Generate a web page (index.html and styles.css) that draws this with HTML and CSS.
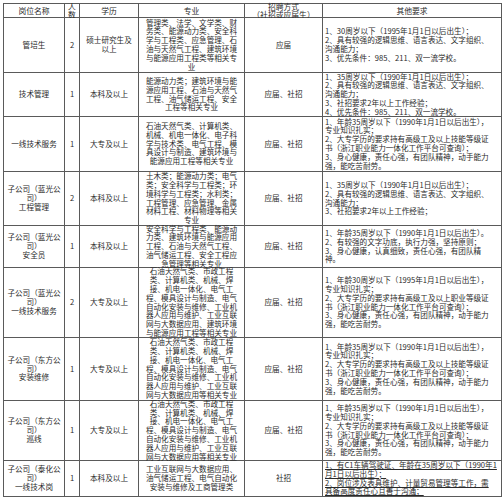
FILE: index.html
```html
<!DOCTYPE html>
<html lang="zh">
<head>
<meta charset="utf-8">
<link rel="stylesheet" href="styles.css">
</head>
<body>
<div class="sheet">
  <div class="c hd"><div>岗位名称</div></div>
  <div class="c hd"><div>人<br>数</div></div>
  <div class="c hd"><div>学历</div></div>
  <div class="c hd"><div>专业</div></div>
  <div class="c hd"><div>招聘方式<br>（社招或应届生）</div></div>
  <div class="c hd"><div>其他要求</div></div>

  <div class="c"><div>管培生</div></div>
  <div class="c"><div>2</div></div>
  <div class="c"><div>硕士研究生及<br>以上</div></div>
  <div class="c"><div>管理类、法学、文学类、财<br>务类、能源动力类、安全科<br>学与工程类、应急管理、石<br>油与天然气工程、建筑环境<br>与能源应用工程类等相关专<br>业</div></div>
  <div class="c"><div>应届</div></div>
  <div class="c req"><div>1、30周岁以下（1995年1月1日以后出生）；<br>2、具有较强的逻辑思维、语言表达、文字组织、<br>沟通能力；<br>3、优先条件：985、211、双一流学校。</div></div>

  <div class="c"><div>技术管理</div></div>
  <div class="c"><div>1</div></div>
  <div class="c"><div>本科及以上</div></div>
  <div class="c"><div>能源动力类；建筑环境与能<br>源应用工程、石油与天然气<br>工程、油气储运工程、安全<br>工程等相关专业</div></div>
  <div class="c"><div>应届、社招</div></div>
  <div class="c req"><div>1、35周岁以下（1990年1月1日以后出生）；<br>2、具有较强的逻辑思维、语言表达、文字组织、<br>沟通能力；<br>3、社招要求2年以上工作经验；<br>4、优先条件：985、211、双一流学校。</div></div>

  <div class="c"><div>一线技术服务</div></div>
  <div class="c"><div>1</div></div>
  <div class="c"><div>大专及以上</div></div>
  <div class="c"><div>石油天然气类、计算机类、<br>机械、机电一体化、电子科<br>学与技术类、电气工程、模<br>具设计与制造、建筑环境与<br>能源应用工程等相关专业</div></div>
  <div class="c"><div>应届、社招</div></div>
  <div class="c req"><div>1、年龄35周岁以下（1990年1月1日以后出生），<br>专业知识扎实；<br>2、大专学历的要求持有高级工及以上技能等级证<br>书（浙江职业能力一体化工作平台可查询）；<br>3、身心健康，责任心强，有团队精神，动手能力<br>强，能吃苦耐劳。</div></div>

  <div class="c"><div>子公司（蓝光公<br>司）<br>工程管理</div></div>
  <div class="c"><div>2</div></div>
  <div class="c"><div>本科及以上</div></div>
  <div class="c"><div>土木类；能源动力类；电气<br>类；安全科学与工程类；环<br>境科学与工程类；水利类；<br>工程管理、应急管理、金属<br>材料工程、材料物理等相关<br>专业</div></div>
  <div class="c"><div>应届、社招</div></div>
  <div class="c req"><div>1、35周岁以下（1990年1月1日以后出生）；<br>2、具有较强的逻辑思维、语言表达、文字组织、<br>沟通能力；<br>3、社招要求2年以上工作经验；</div></div>

  <div class="c"><div>子公司（蓝光公<br>司）<br>安全员</div></div>
  <div class="c"><div>1</div></div>
  <div class="c"><div>本科及以上</div></div>
  <div class="c"><div>安全科学与工程类、能源动<br>力类、建筑环境与能源应用<br>工程、石油与天然气工程、<br>油气储运工程、安全工程应<br>急管理等相关专业</div></div>
  <div class="c"><div>应届、社招</div></div>
  <div class="c req"><div>1、年龄35周岁以下（1990年1月1日以后出生）。<br>2、有较强的文字功底，执行力强，坚持原则；<br>3、身心健康，认真细致，责任心强，有团队精<br>神。</div></div>

  <div class="c"><div>子公司（蓝光公<br>司）<br>一线技术服务</div></div>
  <div class="c"><div>2</div></div>
  <div class="c"><div>大专及以上</div></div>
  <div class="c"><div>石油天然气类、市政工程<br>类、计算机类、机械、焊<br>接、机电一体化、电气工<br>程、模具设计与制造、电气<br>自动化安装与维修、工业机<br>器人应用与维护、工业互联<br>网与大数据应用、建筑环境<br>与能源应用工程等相关专业</div></div>
  <div class="c"><div>应届、社招</div></div>
  <div class="c req"><div>1、年龄30周岁以下（1995年1月1日以后出生），<br>专业知识扎实；<br>2、大专学历的要求持有高级工及以上职业等级证<br>书（浙江职业能力一体化工作平台可查询）；<br>3、身心健康，责任心强，有团队精神，动手能力<br>强，能吃苦耐劳。</div></div>

  <div class="c"><div>子公司（东方公<br>司）<br>安装维修</div></div>
  <div class="c"><div>1</div></div>
  <div class="c"><div>大专及以上</div></div>
  <div class="c"><div>石油天然气类、市政工程<br>类、计算机类、机械、焊<br>接、机电一体化、电气工<br>程、模具设计与制造、电气<br>自动化安装与维修、工业机<br>器人应用与维护、工业互联<br>网与大数据应用等相关专业</div></div>
  <div class="c"><div>应届、社招</div></div>
  <div class="c req"><div>1、年龄35周岁以下（1990年1月1日以后出生），<br>专业知识扎实；<br>2、大专学历的要求持有高级工及以上技能等级证<br>书（浙江职业能力一体化工作平台可查询）；<br>3、身心健康，责任心强，有团队精神，动手能力<br>强，能吃苦耐劳。</div></div>

  <div class="c"><div>子公司（东方公<br>司）<br>巡线</div></div>
  <div class="c"><div>1</div></div>
  <div class="c"><div>大专及以上</div></div>
  <div class="c"><div>石油天然气类、市政工程<br>类、计算机类、机械、焊<br>接、机电一体化、电气工<br>程、模具设计与制造、电气<br>自动化安装与维修、工业机<br>器人应用与维护、工业互联<br>网与大数据应用等相关专业</div></div>
  <div class="c"><div>应届、社招</div></div>
  <div class="c req"><div>1、年龄35周岁以下（1990年1月1日以后出生），<br>专业知识扎实；<br>2、大专学历的要求持有高级工及以上技能等级证<br>书（浙江职业能力一体化工作平台可查询）；<br>3、身心健康，责任心强，有团队精神，动手能力<br>强，能吃苦耐劳。</div></div>

  <div class="c"><div>子公司（泰化公<br>司）<br>一线技术岗</div></div>
  <div class="c"><div>1</div></div>
  <div class="c"><div>本科及以上</div></div>
  <div class="c"><div>工业互联网与大数据应用、<br>油气储运工程、电气自动化<br>安装与维修及工商管理类</div></div>
  <div class="c"><div>社招</div></div>
  <div class="c req ul"><div>1、有C1车辆驾驶证、年龄在35周岁以下（1990年1<br>月1日以后出生）；<br>2、岗位涉及表具维护、计量贸易管理等工作，需<br>具备高度责任心且善于沟通；</div></div>
</div>
</body>
</html>
```
FILE: styles.css
```css
html, body {
  margin: 0;
  padding: 0;
  background: #fff;
}
body {
  font-family: "Noto Sans CJK SC", "Noto Sans", sans-serif;
  color: #2a2a2a;
}
.sheet {
  display: grid;
  grid-template-columns: 60px 14px 58px 105px 77px 178px;
  grid-template-rows: 13px 54px 43px 54px 53px 41px 69px 62px 59px 35px;
  gap: 1px;
  padding: 1px;
  background: #5a5a5a;
  width: max-content;
  margin: 3px 0 0 3px;
}
.c {
  background: #fff;
  display: flex;
  align-items: center;
  justify-content: center;
  text-align: center;
  white-space: nowrap;
  font-size: 7.6px;
  line-height: 8.8px;
  min-height: 0;
  min-width: 0;
}
.hd {
  font-size: 7.8px;
  line-height: 7.8px;
}
.req {
  justify-content: flex-start;
  text-align: left;
  padding-left: 2px;
}
.ul > div {
  text-decoration: underline;
}
```
